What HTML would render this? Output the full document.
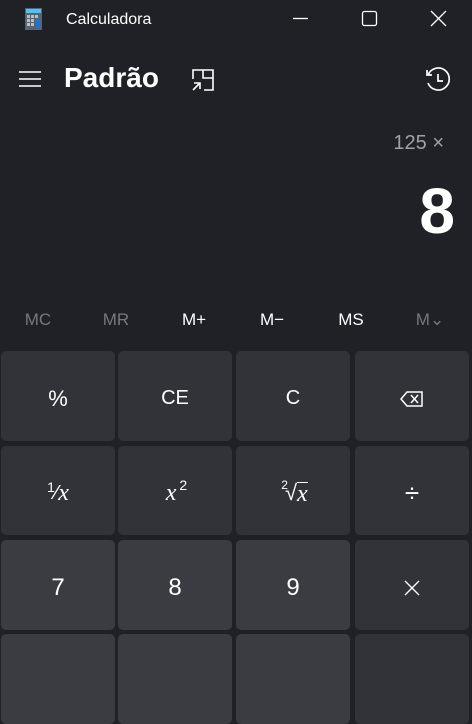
<!DOCTYPE html>
<html><head><meta charset="utf-8"><style>
*{margin:0;padding:0;box-sizing:border-box}
body{width:472px;height:650px;overflow:hidden;background:#202027;font-family:"Liberation Sans",sans-serif;color:#fff;position:relative}
.a{position:absolute}
.btn{position:absolute;border-radius:5px;background:#323239;display:flex;align-items:center;justify-content:center;font-size:20px;color:#fff;padding-top:5px}
.n{background:#3b3b42}
.m{position:absolute;top:310px;font-size:17px;width:60px;text-align:center;color:#fff}
.g{color:#77777d}
.s{font-family:"Liberation Serif",serif;font-style:italic;font-size:24px}
</style></head><body>
<svg class="a" style="left:25px;top:8px" width="17" height="22" viewBox="0 0 17 22"><rect x="0" y="0" width="17" height="22" fill="#5a6470"/><rect x="1" y="1" width="15" height="4" fill="#4fc3f7"/><g fill="#b8c0c8"><rect x="2" y="7" width="3" height="3"/><rect x="6" y="7" width="3" height="3"/><rect x="10" y="7" width="3" height="3"/><rect x="2" y="11" width="3" height="3"/><rect x="6" y="11" width="3" height="3"/><rect x="2" y="15" width="3" height="3"/><rect x="6" y="15" width="3" height="3"/></g><rect x="11" y="11" width="4" height="9" fill="#1976d2"/></svg>
<div class="a" style="left:66px;top:11px;font-size:16px">Calculadora</div>
<svg class="a" style="left:0;top:0" width="472" height="40"><g stroke="#fff" stroke-width="1.3" fill="none"><line x1="293" y1="18.5" x2="308" y2="18.5"/><rect x="362.5" y="11.5" width="14" height="14" rx="2"/><path d="M431 11L446 26M446 11L431 26"/></g></svg>
<svg class="a" style="left:19px;top:70px" width="22" height="18"><g stroke="#fff" stroke-width="1.5"><line x1="0" y1="2" x2="22" y2="2"/><line x1="0" y1="9" x2="22" y2="9"/><line x1="0" y1="16" x2="22" y2="16"/></g></svg>
<div class="a" style="left:64px;top:62px;font-size:28px;font-weight:bold">Padrão</div>
<svg class="a" style="left:191px;top:68px" width="24" height="24" viewBox="0 0 24 24"><g stroke="#fff" stroke-width="1.6" fill="none"><path d="M2 11V2H22V22H13"/><path d="M12 2V10H22"/><path d="M2 22L9 15M3 15H9V21"/></g></svg>
<svg class="a" style="left:425px;top:66px" width="26" height="26" viewBox="0 0 26 26"><g stroke="#fff" stroke-width="1.7" fill="none"><path d="M3 9A11 11 0 1 1 3 17"/><path d="M2 4V9H7"/><path d="M13 8V15H18"/></g></svg>
<div class="a" style="right:28px;top:132px;font-size:20px;color:#a0a0a6">125 ×</div>
<div class="a" style="right:17px;top:174px;font-size:64px;font-weight:bold">8</div>
<div class="m g" style="left:8px">MC</div>
<div class="m g" style="left:86px">MR</div>
<div class="m" style="left:164px">M+</div>
<div class="m" style="left:242px">M−</div>
<div class="m" style="left:321px">MS</div>
<div class="m g" style="left:400px">M⌄</div>
<div class="btn" style="left:1px;top:351px;width:114px;height:90px;font-size:22px">%</div>
<div class="btn" style="left:118px;top:351px;width:114px;height:90px">CE</div>
<div class="btn" style="left:236px;top:351px;width:114px;height:90px">C</div>
<div class="btn" style="left:355px;top:351px;width:114px;height:90px"><svg width="24" height="18" viewBox="0 0 24 18"><g stroke="#fff" stroke-width="1.5" fill="none"><path d="M7 2H22V16H7L1 9Z"/><path d="M11 5L18 13M18 5L11 13"/></g></svg></div>
<div class="btn" style="left:1px;top:446px;width:114px;height:89px"><span style="font-size:14px;position:relative;top:-6px">1</span><span style="font-size:20px">⁄</span><span class="s">x</span></div>
<div class="btn" style="left:118px;top:446px;width:114px;height:89px"><span class="s">x</span><span style="font-size:14px;position:relative;top:-8px;left:3px">2</span></div>
<div class="btn" style="left:236px;top:446px;width:114px;height:89px"><span style="font-size:12px;position:relative;top:-8px;left:3px">2</span><span style="font-size:22px">√</span><span class="s" style="border-top:1.3px solid #fff;line-height:22px">x</span></div>
<div class="btn" style="left:355px;top:446px;width:114px;height:89px;font-size:26px">÷</div>
<div class="btn n" style="left:1px;top:540px;width:114px;height:90px;font-size:24px">7</div>
<div class="btn n" style="left:118px;top:540px;width:114px;height:90px;font-size:24px">8</div>
<div class="btn n" style="left:236px;top:540px;width:114px;height:90px;font-size:24px">9</div>
<div class="btn" style="left:355px;top:540px;width:114px;height:90px"><svg width="16" height="16"><path d="M1 1L15 15M15 1L1 15" stroke="#fff" stroke-width="1.4"/></svg></div>
<div class="btn n" style="left:1px;top:634px;width:114px;height:90px"></div>
<div class="btn n" style="left:118px;top:634px;width:114px;height:90px"></div>
<div class="btn n" style="left:236px;top:634px;width:114px;height:90px"></div>
<div class="btn" style="left:355px;top:634px;width:114px;height:90px"></div>
</body></html>
